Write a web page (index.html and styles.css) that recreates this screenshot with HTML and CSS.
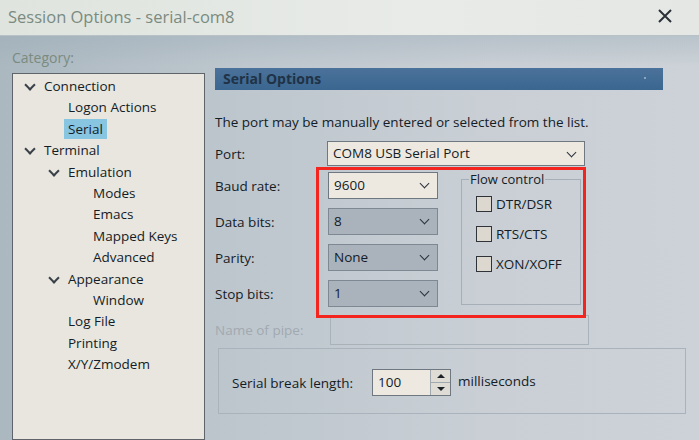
FILE: index.html
```html
<!DOCTYPE html>
<html lang="en">

<head>
    <meta charset="UTF-8">
    <title>Session Options - serial-com8</title>
    <link rel="stylesheet" href="styles.css">
</head>

<body>
    <div class="window">
        <div class="titlebar">
            <span class="title">Session Options - serial-com8</span>
            <svg class="close" width="16" height="16" viewBox="0 0 16 16">
                <path d="M2 2 L14 14 M14 2 L2 14" stroke="#2a3038" stroke-width="2" fill="none" />
            </svg>
        </div>
        <div class="main">
            <div class="left">
                <div class="cat-label">Category:</div>
                <div class="tree">
                    <div class="node lvl0"><span class="chev"></span>Connection</div>
                    <div class="node lvl1"><span class="spacer"></span>Logon Actions</div>
                    <div class="node lvl1"><span class="spacer"></span><span class="selected">Serial</span></div>
                    <div class="node lvl0"><span class="chev"></span>Terminal</div>
                    <div class="node lvl1"><span class="chev"></span>Emulation</div>
                    <div class="node lvl2"><span class="spacer"></span>Modes</div>
                    <div class="node lvl2"><span class="spacer"></span>Emacs</div>
                    <div class="node lvl2"><span class="spacer"></span>Mapped Keys</div>
                    <div class="node lvl2"><span class="spacer"></span>Advanced</div>
                    <div class="node lvl1"><span class="chev"></span>Appearance</div>
                    <div class="node lvl2"><span class="spacer"></span>Window</div>
                    <div class="node lvl1"><span class="spacer"></span>Log File</div>
                    <div class="node lvl1"><span class="spacer"></span>Printing</div>
                    <div class="node lvl1"><span class="spacer"></span>X/Y/Zmodem</div>
                </div>
            </div>
            <div class="right">
                <div class="header">Serial Options<span class="dot"></span></div>
                <div class="desc">The port may be manually entered or selected from the list.</div>
                <div class="row port-row">
                    <span class="label">Port:</span>
                    <div class="combo wide">COM8 USB Serial Port<span class="arrow"></span></div>
                </div>
                <div class="settings">
                    <div class="fields">
                        <div class="row">
                            <span class="label">Baud rate:</span>
                            <div class="combo">9600<span class="arrow"></span></div>
                        </div>
                        <div class="row">
                            <span class="label">Data bits:</span>
                            <div class="combo grey">8<span class="arrow"></span></div>
                        </div>
                        <div class="row">
                            <span class="label">Parity:</span>
                            <div class="combo grey">None<span class="arrow"></span></div>
                        </div>
                        <div class="row">
                            <span class="label">Stop bits:</span>
                            <div class="combo grey">1<span class="arrow"></span></div>
                        </div>
                    </div>
                    <fieldset class="flow">
                        <legend>Flow control</legend>
                        <label class="check"><span class="box"></span>DTR/DSR</label>
                        <label class="check"><span class="box"></span>RTS/CTS</label>
                        <label class="check"><span class="box"></span>XON/XOFF</label>
                    </fieldset>
                </div>
                <div class="row pipe-row">
                    <span class="label disabled">Name of pipe:</span>
                    <div class="pipe-box"></div>
                </div>
                <div class="break-group">
                    <span class="break-label">Serial break length:</span>
                    <div class="spin">
                        <span class="spin-value">100</span>
                        <span class="spin-btns">
                            <span class="up"></span>
                            <span class="down"></span>
                        </span>
                    </div>
                    <span class="unit">milliseconds</span>
                </div>
            </div>
            <div class="highlight"></div>
        </div>
    </div>
</body>

</html>
```

FILE: styles.css
```css
* {
    margin: 0;
    padding: 0;
    box-sizing: border-box;
}

body {
    font-family: 'Open Sans', sans-serif;
    font-size: 13.5px;
    color: #141c26;
    width: 699px;
    height: 440px;
    overflow: hidden;
}

.window {
    width: 699px;
    height: 440px;
    overflow: hidden;
}

.titlebar {
    height: 36px;
    display: flex;
    justify-content: space-between;
    align-items: center;
    padding: 0 26px 0 8px;
    background: linear-gradient(to right, #dfe4de, #e8ebe8 60%, #e4e7e4);
    border-bottom: 1px solid #b8c2c6;
}

.title {
    font-size: 16.5px;
    color: #7a8b80;
    margin-top: -2px;
}

.close {
    margin-top: -4px;
}

.main {
    position: relative;
    display: flex;
    height: 404px;
    background: linear-gradient(to bottom, rgba(150, 168, 180, 0.35), rgba(150, 168, 180, 0) 30px),
        linear-gradient(to right, #abb8c0 0%, #bec7ce 35%, #c9cfd5 70%, #ccd2d7 100%);
}

.left {
    width: 205px;
    padding: 12px 0 0 12px;
    display: flex;
    flex-direction: column;
}

.cat-label {
    height: 20px;
    line-height: 20px;
    color: #7a8b80;
    font-size: 14px;
}

.tree {
    margin-top: 5px;
    height: 420px;
    width: 193px;
    background: #e8e6df;
    border: 1px solid #5e646a;
    padding-top: 2px;
}

.node {
    height: 21.4px;
    line-height: 21.4px;
    display: flex;
    align-items: center;
    white-space: nowrap;
}

.lvl0 {
    padding-left: 11px;
}

.lvl1 {
    padding-left: 35px;
}

.lvl2 {
    padding-left: 60px;
}

.chev,
.spacer {
    width: 20px;
    height: 21px;
    flex: none;
    position: relative;
}

.chev::before {
    content: "";
    position: absolute;
    left: 2px;
    top: 5px;
    width: 6px;
    height: 6px;
    border-right: 2px solid #3a4048;
    border-bottom: 2px solid #3a4048;
    transform: rotate(45deg);
}

.selected {
    background: #88c5e0;
    padding: 0 4px;
    margin-left: -4px;
    line-height: 20px;
}

.right {
    flex: 1;
    padding: 32px 0 0 10px;
}

.header {
    width: 448px;
    height: 22px;
    line-height: 22px;
    padding-left: 8px;
    font-weight: 700;
    font-size: 14px;
    color: #1f3246;
    background: linear-gradient(to bottom, #4b7299, #3a6690);
    position: relative;
}

.dot {
    position: absolute;
    right: 17px;
    top: 9px;
    width: 2px;
    height: 2px;
    background: #8aa6c0;
}

.desc {
    margin-top: 22px;
    height: 20px;
    line-height: 20px;
}

.row {
    display: flex;
    align-items: center;
}

.label {
    width: 112px;
    flex: none;
}

.label.disabled {
    color: #a2a9b0;
}

.port-row {
    margin-top: 9px;
}

.combo {
    position: relative;
    width: 110px;
    height: 27px;
    line-height: 25px;
    padding-left: 5px;
    background: #eee9e0;
    border: 1px solid #6f7780;
}

.combo.wide {
    width: 258px;
    height: 25px;
    line-height: 23px;
}

.combo.grey {
    background: #aab2bb;
    border-color: #7e8892;
}

.arrow {
    position: absolute;
    right: 9px;
    top: 7px;
    width: 7px;
    height: 7px;
    border-right: 1.5px solid #2a323c;
    border-bottom: 1.5px solid #2a323c;
    transform: rotate(45deg);
}

.settings {
    display: flex;
    margin-top: 6px;
}

.fields .row {
    height: 27px;
    margin-bottom: 9px;
}

.fields .label {
    width: 113px;
}

.flow {
    margin-left: 23px;
    margin-top: -2px;
    width: 120px;
    height: 135px;
    border: 1px solid #a6afb8;
    padding: 8px 0 0 0;
}

.flow legend {
    padding: 0 1px;
    margin-left: 7px;
    font-size: 13px;
}

.check {
    display: flex;
    align-items: center;
    height: 16px;
    margin: 0 0 14px 14px;
}

.box {
    width: 16px;
    height: 16px;
    border: 1px solid #2e343a;
    background: #ddd8cf;
    margin-right: 4px;
}

.pipe-row {
    margin-top: -1px;
}

.pipe-box {
    margin-left: 3px;
    width: 259px;
    height: 30px;
    border: 1px solid #a9b1b9;
}

.break-group {
    margin: 3px 0 0 3px;
    width: 468px;
    height: 66px;
    border: 1px solid #aab3bb;
    display: flex;
    align-items: center;
    padding: 3px 0 0 13px;
}

.break-label {
    width: 140px;
}

.spin {
    display: flex;
    width: 79px;
    height: 27px;
    border: 1px solid #6f7780;
    background: #eee9e0;
}

.spin-value {
    flex: 1;
    padding-left: 5px;
    line-height: 25px;
}

.spin-btns {
    width: 20px;
    display: flex;
    flex-direction: column;
    border-left: 1px solid #a0a8b0;
    background: #dfdcd6;
}

.up,
.down {
    flex: 1;
    position: relative;
}

.down {
    border-top: 1px solid #a0a8b0;
}

.up::before,
.down::before {
    content: "";
    position: absolute;
    left: 6px;
    top: 4px;
    border-left: 4px solid transparent;
    border-right: 4px solid transparent;
}

.up::before {
    border-bottom: 4px solid #1d2228;
}

.down::before {
    border-top: 4px solid #1d2228;
}

.unit {
    margin-left: 7px;
    margin-top: -3px;
}

.highlight {
    position: absolute;
    left: 316px;
    top: 131px;
    width: 270px;
    height: 151px;
    border: 3px solid #f4241f;
}
```
